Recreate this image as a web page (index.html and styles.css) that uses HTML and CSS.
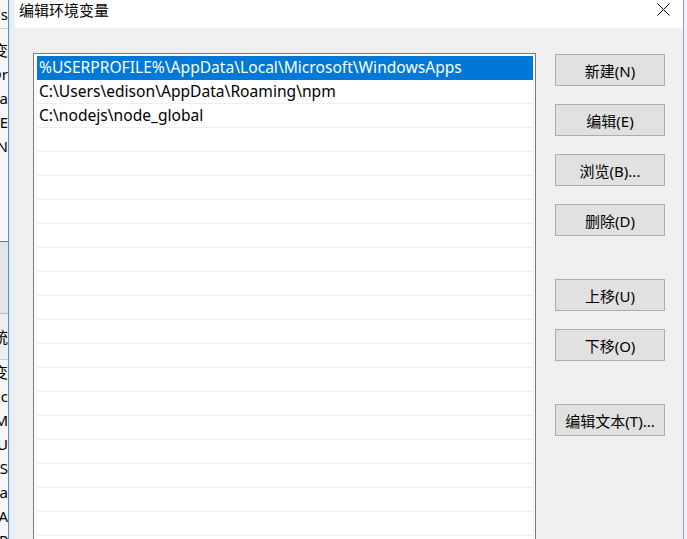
FILE: index.html
```html
<!DOCTYPE html>
<html lang="zh-CN">
<head>
<meta charset="utf-8">
<title>编辑环境变量</title>
<link rel="stylesheet" href="styles.css">
</head>
<body>
<div class="screen">
  <div class="bgwin">
    <div class="bg-head"><span>Cons</span></div>
    <div class="bg-spacer"></div>
    <div class="bg-row"><span>变</span></div>
    <div class="bg-row"><span>Or</span></div>
    <div class="bg-row"><span>a</span></div>
    <div class="bg-row"><span>E</span></div>
    <div class="bg-row"><span>N</span></div>
    <div class="bg-fill"></div>
    <div class="bg-gray"></div>
    <div class="bg-head2"><span>统</span></div>
    <div class="bg-row"><span>变</span></div>
    <div class="bg-row"><span>c</span></div>
    <div class="bg-row"><span>M</span></div>
    <div class="bg-row"><span>NU</span></div>
    <div class="bg-row"><span>OS</span></div>
    <div class="bg-row"><span>a</span></div>
    <div class="bg-row"><span>A</span></div>
    <div class="bg-row"><span>P</span></div>
  </div>
  <div class="glow"></div>
  <div class="dialog">
    <div class="titlebar">
      <span class="title">编辑环境变量</span>
      <span class="close">
        <svg width="13" height="13" viewBox="0 0 13 13"><path d="M0.5 0.5 L12.5 12.5 M12.5 0.5 L0.5 12.5" stroke="#000" stroke-width="1" fill="none"/></svg>
      </span>
    </div>
    <div class="body">
      <div class="list">
        <div class="rows">
          <div class="row sel">%USERPROFILE%\AppData\Local\Microsoft\WindowsApps</div>
          <div class="row">C:\Users\edison\AppData\Roaming\npm</div>
          <div class="row">C:\nodejs\node_global</div>
          <div class="row"></div>
          <div class="row"></div>
          <div class="row"></div>
          <div class="row"></div>
          <div class="row"></div>
          <div class="row"></div>
          <div class="row"></div>
          <div class="row"></div>
          <div class="row"></div>
          <div class="row"></div>
          <div class="row"></div>
          <div class="row"></div>
          <div class="row"></div>
          <div class="row"></div>
          <div class="row"></div>
          <div class="row"></div>
          <div class="row"></div>
          <div class="row"></div>
        </div>
      </div>
      <div class="buttons">
        <button class="btn">新建(N)</button>
        <button class="btn">编辑(E)</button>
        <button class="btn">浏览(B)...</button>
        <button class="btn">删除(D)</button>
        <button class="btn group">上移(U)</button>
        <button class="btn">下移(O)</button>
        <button class="btn group">编辑文本(T)...</button>
      </div>
    </div>
  </div>
  <div class="rightedge"></div>
</div>
</body>
</html>
```
FILE: styles.css
```css
* { box-sizing: border-box; }
html, body { margin: 0; padding: 0; }
body {
  font-family: "Noto Sans", "Noto Sans CJK SC", sans-serif;
  font-size: 15px;
  color: #000;
  background: #f0f0f0;
}
.screen {
  display: flex;
  width: 687px;
  height: 539px;
  overflow: hidden;
}

/* background window strip on the left */
.bgwin {
  width: 9px;
  flex: none;
  display: flex;
  flex-direction: column;
  background: #f6f7f9;
  border-right: 1px solid #7c8796;
  overflow: hidden;
}
.bgwin > div {
  display: flex;
  justify-content: flex-end;
  white-space: nowrap;
  overflow: hidden;
  flex: none;
}
.bgwin span { font-size: 15px; line-height: 24px; }
.bg-head { height: 29px; border-bottom: 1px solid #c8ccd2; align-items: center; }
.bg-spacer { height: 9px; }
.bg-row { height: 24px; align-items: center; }
.bg-fill { height: 83px; }
.bg-gray { height: 72px; background: #e2e5ea; border-top: 1px solid #6f7a88; }
.bg-head2 { height: 47px; background: #eceef1; border-top: 1px solid #b7bcc4; border-bottom: 1px solid #c9cdd3; align-items: center; }

.glow {
  width: 6px;
  flex: none;
  background: linear-gradient(to right, #d4e9f9, #e6f3fd 60%, #f6e8da);
}

/* dialog */
.dialog {
  flex: 1;
  display: flex;
  flex-direction: column;
  background: #f0f0f0;
  min-width: 0;
}
.titlebar {
  height: 28px;
  flex: none;
  background: #fff;
  display: flex;
  justify-content: space-between;
  align-items: flex-start;
  padding: 1px 13px 0 4px;
}
.title {
  font-size: 15px;
  line-height: 18px;
}
.close {
  display: flex;
  padding-top: 2px;
}
.body {
  flex: 1;
  display: flex;
  gap: 19px;
  padding: 25px 18px 0 18px;
  overflow: hidden;
}
.list {
  width: 503px;
  flex: none;
  height: 520px;
  background: #fff;
  border: 1px solid #7a7a7a;
  padding: 2px 1px 0 2px;
  font-size: 15.6px;
}
.rows {
  border-left: 1px solid #f2f2f2;
  border-right: 1px solid #f2f2f2;
}
.row {
  height: 24px;
  line-height: 23px;
  padding-left: 2px;
  border-bottom: 1px solid #f0f0f0;
  white-space: nowrap;
  overflow: hidden;
}
.row.sel {
  background: #0078d7;
  color: #fff;
  border-bottom-color: #0078d7;
}

.buttons {
  width: 110px;
  flex: none;
  display: flex;
  flex-direction: column;
  gap: 18px;
  padding-top: 1px;
}
.btn {
  height: 32px;
  width: 110px;
  flex: none;
  background: #e1e1e1;
  border: 1px solid #adadad;
  font-family: "Noto Sans", "Noto Sans CJK SC", sans-serif;
  font-size: 15px;
  color: #000;
  padding: 0;
  border-radius: 0;
}
.btn.group { margin-top: 25px; }

.rightedge {
  width: 4px;
  flex: none;
  background: #eef2f6;
  border-left: 1px solid #8ea3bd;
}
```
